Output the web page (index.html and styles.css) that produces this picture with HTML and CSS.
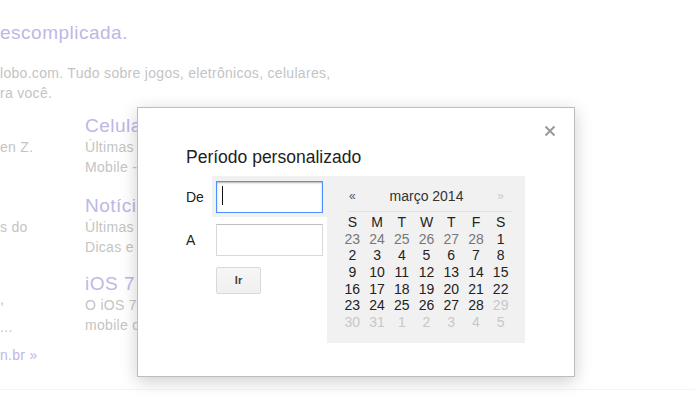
FILE: index.html
```html
<!DOCTYPE html>
<html lang="pt-BR">
<head>
<meta charset="utf-8">
<title>Período personalizado</title>
<link rel="stylesheet" href="styles.css">
</head>
<body>
<div class="page">
  <div class="bg">
    <div class="headline">escomplicada.</div>
    <div class="desc">lobo.com. Tudo sobre jogos, eletrônicos, celulares,<br>ra você.</div>
    <div class="cols">
      <div class="col1">
        <div class="c1 c1-a">en Z.</div>
        <div class="c1 c1-b">s do</div>
        <div class="c1 c1-c">,</div>
        <div class="c1 c1-d">...</div>
        <div class="c1 c1-link">n.br »</div>
      </div>
      <div class="col2">
        <div class="item">
          <div class="item-title">Celulares</div>
          <div class="item-text">Últimas notícias</div>
          <div class="item-text">Mobile - tecnologia</div>
        </div>
        <div class="item">
          <div class="item-title">Notícias</div>
          <div class="item-text">Últimas notícias</div>
          <div class="item-text">Dicas e truques</div>
        </div>
        <div class="item">
          <div class="item-title">iOS 7</div>
          <div class="item-text">O iOS 7 chegou</div>
          <div class="item-text">mobile da Apple</div>
        </div>
      </div>
    </div>
    <div class="rule"></div>
  </div>

  <div class="dialog">
    <div class="close">
      <svg width="12" height="12" viewBox="0 0 12 12"><path d="M1.5 1.5 L10.5 10.5 M10.5 1.5 L1.5 10.5" stroke="#9a9a9a" stroke-width="2" fill="none"/></svg>
    </div>
    <div class="title">Período personalizado</div>
    <div class="form">
      <div class="left">
        <div class="row row-de">
          <div class="label">De</div>
          <div class="field-wrap">
            <div class="input input-focus"><span class="caret"></span></div>
          </div>
        </div>
        <div class="row row-a">
          <div class="label">A</div>
          <div class="input input-plain"></div>
        </div>
        <div class="btn">Ir</div>
      </div>
      <div class="calendar">
        <div class="cal-head">
          <div class="nav nav-prev">«</div>
          <div class="month">março 2014</div>
          <div class="nav nav-next">»</div>
        </div>
        <div class="cal-line"></div>
        <div class="days">
          <div class="wd">S</div><div class="wd">M</div><div class="wd">T</div><div class="wd">W</div><div class="wd">T</div><div class="wd">F</div><div class="wd">S</div>
          <div class="d prev">23</div><div class="d prev">24</div><div class="d prev">25</div><div class="d prev">26</div><div class="d prev">27</div><div class="d prev">28</div><div class="d">1</div>
          <div class="d">2</div><div class="d">3</div><div class="d">4</div><div class="d">5</div><div class="d">6</div><div class="d">7</div><div class="d">8</div>
          <div class="d">9</div><div class="d">10</div><div class="d">11</div><div class="d">12</div><div class="d">13</div><div class="d">14</div><div class="d">15</div>
          <div class="d">16</div><div class="d">17</div><div class="d">18</div><div class="d">19</div><div class="d">20</div><div class="d">21</div><div class="d">22</div>
          <div class="d">23</div><div class="d">24</div><div class="d">25</div><div class="d">26</div><div class="d">27</div><div class="d">28</div><div class="d off">29</div>
          <div class="d off">30</div><div class="d off">31</div><div class="d off">1</div><div class="d off">2</div><div class="d off">3</div><div class="d off">4</div><div class="d off">5</div>
        </div>
      </div>
    </div>
  </div>
</div>
</body>
</html>
```

FILE: styles.css
```css
html, body {
  margin: 0;
  padding: 0;
  background: #ffffff;
}

body {
  font-family: "Liberation Sans", Arial, sans-serif;
  width: 695px;
  height: 420px;
  overflow: hidden;
}

.page {
  position: relative;
  width: 695px;
  height: 420px;
  overflow: hidden;
}

/* faded background page */
.bg {
  padding-top: 22px;
}

.headline {
  font-size: 19px;
  letter-spacing: 0.5px;
  line-height: 22px;
  color: #bcb8e6;
  white-space: nowrap;
}

.desc {
  margin-top: 19px;
  font-size: 14px;
  letter-spacing: 0.3px;
  line-height: 20px;
  color: #c4c4c4;
  white-space: nowrap;
}

.cols {
  display: flex;
  margin-top: 12px;
}

.col1 {
  width: 85px;
  font-size: 14px;
  letter-spacing: 0.3px;
  line-height: 20px;
  color: #c4c4c4;
  white-space: nowrap;
}

.c1-a { margin-top: 22px; }
.c1-b { margin-top: 60px; }
.c1-c { margin-top: 52px; }
.c1-d { margin-top: 8px; }
.c1-link { margin-top: 8px; color: #bcb8e6; }

.col2 {
  white-space: nowrap;
}

.item + .item {
  margin-top: 18px;
}

.item:last-child {
  margin-top: 16px;
}

.item-title {
  font-size: 19px;
  letter-spacing: 0.5px;
  line-height: 22px;
  color: #bcb8e6;
}

.item-text {
  font-size: 14px;
  letter-spacing: 0.3px;
  line-height: 20px;
  color: #c4c4c4;
}

.rule {
  margin-top: 24px;
  height: 1px;
  background: #f5f5f5;
}

/* dialog */
.dialog {
  position: absolute;
  left: 137px;
  top: 107px;
  width: 438px;
  height: 270px;
  box-sizing: border-box;
  background: #ffffff;
  border: 1px solid #bdbdbd;
  box-shadow: 0 4px 16px rgba(0, 0, 0, 0.2);
  padding: 39px 0 0 48px;
}

.close {
  position: absolute;
  right: 18px;
  top: 17px;
  width: 12px;
  height: 12px;
}

.close svg {
  display: block;
}

.title {
  font-size: 17.5px;
  line-height: 20px;
  color: #222222;
  white-space: nowrap;
}

.form {
  display: flex;
  margin-top: 9px;
}

.left {
  width: 141px;
}

.row {
  display: flex;
  align-items: center;
}

.label {
  width: 26px;
  font-size: 14px;
  color: #222222;
}

.row-de {
  height: 41px;
}

.field-wrap {
  width: 115px;
  height: 41px;
  box-sizing: border-box;
  padding: 5px 4px 0 4px;
  background: #f1f1f1;
}

.input {
  position: relative;
  width: 107px;
  height: 32px;
  box-sizing: border-box;
  background: #ffffff;
}

.input-focus {
  border: 1px solid #4d90fe;
  box-shadow: inset 0 1px 2px rgba(0, 0, 0, 0.3);
}

.caret {
  position: absolute;
  left: 5px;
  top: 4px;
  width: 1px;
  height: 19px;
  background: #111111;
}

.row-a {
  margin-top: 7px;
}

.input-plain {
  margin-left: 4px;
  border: 1px solid #d9d9d9;
  border-top-color: #c0c0c0;
}

.btn {
  margin-top: 11px;
  margin-left: 30px;
  width: 45px;
  height: 27px;
  box-sizing: border-box;
  border: 1px solid #d9d9d9;
  border-radius: 2px;
  background: linear-gradient(#f6f6f6, #f0f0f0);
  font-size: 11px;
  font-weight: bold;
  color: #444444;
  line-height: 25px;
  text-align: center;
}

.calendar {
  width: 198px;
  height: 167px;
  box-sizing: border-box;
  background: #f1f1f1;
  padding: 8px 12px 0 13px;
}

.cal-head {
  display: grid;
  grid-template-columns: repeat(7, 1fr);
  height: 24px;
  line-height: 24px;
  font-size: 14px;
  text-align: center;
}

.nav-prev {
  grid-column: 1;
  color: #555555;
  font-size: 12px;
}

.month {
  grid-column: 2 / 7;
  color: #333333;
}

.nav-next {
  grid-column: 7;
  color: #cccccc;
  font-size: 12px;
}

.cal-line {
  height: 1px;
  background: #e2e2e2;
  margin: 3px 0 2px 9px;
}

.days {
  display: grid;
  grid-template-columns: repeat(7, 1fr);
  grid-auto-rows: 16.67px;
  line-height: 16.67px;
  font-size: 14px;
  text-align: center;
  color: #222222;
}

.wd {
  color: #222222;
}

.d.prev {
  color: #777777;
}

.d.off {
  color: #c8c8c8;
}
```
